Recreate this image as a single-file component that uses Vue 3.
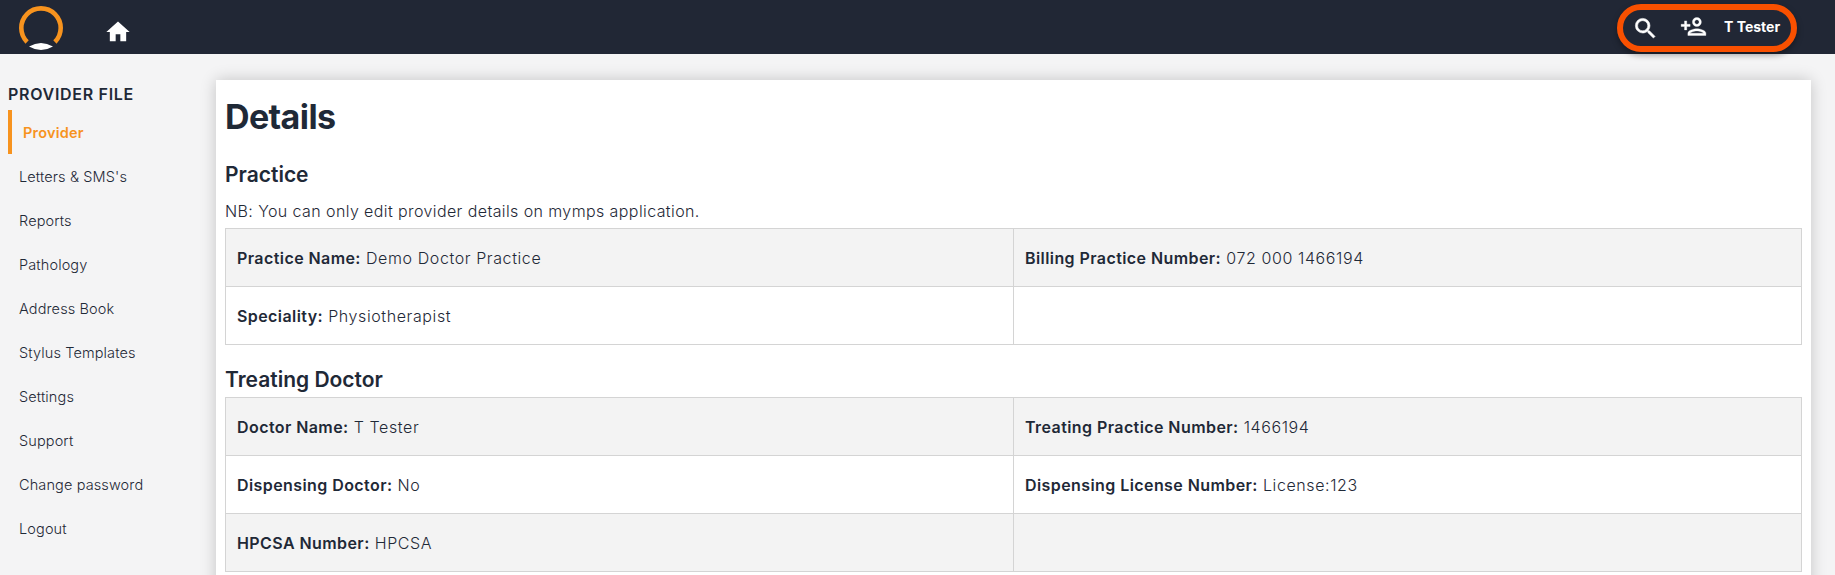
<script setup>
const menu = ['Letters & SMS\'s', 'Reports', 'Pathology', 'Address Book', 'Stylus Templates', 'Settings', 'Support', 'Change password', 'Logout']
const practice = [
  [{ k: 'Practice Name:', v: 'Demo Doctor Practice' }, { k: 'Billing Practice Number:', v: '072 000 1466194' }],
  [{ k: 'Speciality:', v: 'Physiotherapist' }, null],
]
const doctor = [
  [{ k: 'Doctor Name:', v: 'T Tester' }, { k: 'Treating Practice Number:', v: '1466194' }],
  [{ k: 'Dispensing Doctor:', v: 'No' }, { k: 'Dispensing License Number:', v: 'License:123' }],
  [{ k: 'HPCSA Number:', v: 'HPCSA' }, null],
]
const tables = { practice, doctor }
</script>

<template>
  <div class="page">
    <header class="top">
      <svg class="logo" width="44" height="46" viewBox="0 0 44 46">
        <path d="M8.1 38 A19.7 19.7 0 1 1 35.9 38" fill="none" stroke="#f7931e" stroke-width="4.6" />
        <path d="M10 42.5 Q22 35.5 34 42.5 Q22 49.5 10 42.5Z" fill="#fff" />
      </svg>
      <svg class="home" width="28" height="28" viewBox="0 0 24 24"><path d="M10 20v-6h4v6h5v-8h3L12 3 2 12h3v8z" fill="#fff" /></svg>
      <div class="pill">
        <svg width="27" height="27" viewBox="0 0 24 24"><path d="M15.5 14h-.79l-.28-.27A6.47 6.47 0 0 0 16 9.5 6.5 6.5 0 1 0 9.5 16c1.61 0 3.09-.59 4.23-1.57l.27.28v.79l5 4.99L20.49 19l-4.99-5zm-6 0C7.01 14 5 11.99 5 9.5S7.01 5 9.5 5 14 7.01 14 9.5 11.99 14 9.5 14z" fill="#fff" stroke="#fff" stroke-width="0.5" /></svg>
        <svg class="add" width="27" height="27" viewBox="0 0 24 24"><path d="M15 12c2.21 0 4-1.79 4-4s-1.79-4-4-4-4 1.79-4 4 1.79 4 4 4zm0-6c1.1 0 2 .9 2 2s-.9 2-2 2-2-.9-2-2 .9-2 2-2zm0 8c-2.67 0-8 1.34-8 4v2h16v-2c0-2.66-5.33-4-8-4zm-6 4c.22-.72 3.31-2 6-2 2.7 0 5.8 1.29 6 2H9zm-3-3v-3h3v-2H6V7H4v3H1v2h3v3h2z" fill="#fff" stroke="#fff" stroke-width="0.3" /></svg>
        <span class="user">T Tester</span>
      </div>
    </header>
    <div class="body">
      <aside class="side">
        <div class="side-title">PROVIDER FILE</div>
        <a class="item active">Provider</a>
        <a v-for="m in menu" :key="m" class="item">{{ m }}</a>
      </aside>
      <main class="card">
        <h1>Details</h1>
        <h2>Practice</h2>
        <p class="note">NB: You can only edit provider details on mymps application.</p>
        <table>
          <tbody>
            <tr v-for="(r, i) in tables.practice" :key="i">
              <td v-for="(c, j) in r" :key="j"><template v-if="c"><b>{{ c.k }}</b> {{ c.v }}</template></td>
            </tr>
          </tbody>
        </table>
        <h2 class="second">Treating Doctor</h2>
        <table>
          <tbody>
            <tr v-for="(r, i) in tables.doctor" :key="i">
              <td v-for="(c, j) in r" :key="j"><template v-if="c"><b>{{ c.k }}</b> {{ c.v }}</template></td>
            </tr>
          </tbody>
        </table>
      </main>
    </div>
  </div>
</template>

<style>
html, body { margin: 0; overflow: hidden; }
</style>

<style scoped>
.page { width: 1835px; height: 575px; overflow: hidden; background: #f4f4f5; color: #1f2937; font-family: Inter, "Noto Sans", sans-serif; }
.top { height: 54px; background: #212735; display: flex; align-items: center; box-sizing: border-box; padding-left: 19px; }
.logo { flex: none; }
.home { margin-left: 41px; margin-top: 10px; }
.pill { margin-left: auto; margin-right: 38px; margin-top: 2px; width: 180px; height: 48px; box-sizing: border-box; border: 6px solid #f95000; border-radius: 24px; display: flex; align-items: center; padding-left: 9px; box-shadow: 0 3px 6px rgba(0,0,0,.35); color: #fff; }
.add { margin-left: 21px; margin-top: -4px; }
.user { margin-left: 17px; margin-top: -3px; font-size: 14px; font-weight: 700; white-space: nowrap; }
.body { display: flex; align-items: flex-start; }
.side { width: 216px; flex: none; box-sizing: border-box; padding: 30px 0 0 8px; }
.side-title { font-size: 16px; font-weight: 600; line-height: 20px; letter-spacing: 0.7px; margin-bottom: 6px; }
.item { display: flex; align-items: center; height: 44px; font-size: 14.5px; font-weight: 350; letter-spacing: 0.12px; padding-left: 11px; }
.item.active { border-left: 4px solid #f7931e; padding-left: 11px; color: #f7931e; font-weight: 600; letter-spacing: 0.2px; }
.card { width: 1595px; margin-top: 26px; height: 600px; background: #fff; box-shadow: 0 0 15px rgba(0,0,0,.2); box-sizing: border-box; padding: 0 9px; }
h1 { margin: 0; padding-top: 17px; font-size: 34px; line-height: 40px; font-weight: 700; letter-spacing: -0.6px; }
h2 { margin: 0; padding-top: 24px; font-size: 21px; line-height: 28px; font-weight: 600; }
.second { padding-top: 21px; padding-bottom: 3px; }
.note { margin: 0; padding-top: 10px; font-size: 16px; font-weight: 350; line-height: 24px; letter-spacing: 0.4px; height: 29px; }
table { width: 1577px; border-collapse: collapse; table-layout: fixed; font-size: 16px; font-weight: 350; letter-spacing: 0.6px; }
td { border: 1px solid #d4d4d4; height: 58px; box-sizing: border-box; padding: 0 11px; }
b { font-weight: 600; letter-spacing: 0.42px; }
tr:nth-child(odd) { background: #f3f3f3; }
</style>
